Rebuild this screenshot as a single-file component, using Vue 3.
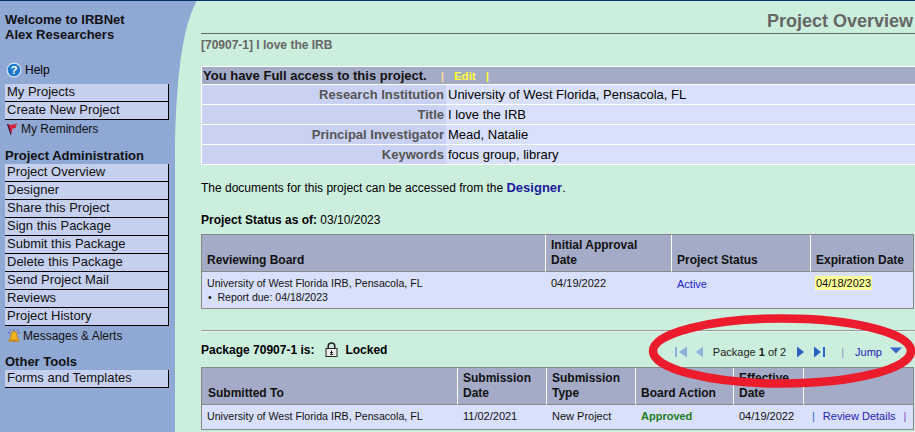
<script setup>
const adminLinks = ['Project Overview','Designer','Share this Project','Sign this Package','Submit this Package','Delete this Package','Send Project Mail','Reviews','Project History']
const details = [
  ['Research Institution','University of West Florida, Pensacola, FL'],
  ['Title','I love the IRB'],
  ['Principal Investigator','Mead, Natalie'],
  ['Keywords','focus group, library'],
]
</script>

<template>
  <div class="page">
    <aside class="side">
      <div class="welcome">Welcome to IRBNet<br>Alex Researchers</div>
      <div class="help">
        <svg width="16" height="16" viewBox="0 0 16 16"><circle cx="8" cy="8" r="7.5" fill="#d8e8f8"/><circle cx="8" cy="8" r="6.3" fill="#1c78cc"/><text x="8" y="12.2" text-anchor="middle" font-size="11.5" font-weight="700" font-family="Liberation Sans" fill="#fff">?</text></svg>
        <span>Help</span>
      </div>
      <a class="nav">My Projects</a>
      <a class="nav">Create New Project</a>
      <div class="rem">
        <svg width="11" height="12" viewBox="0 0 11 12"><path d="M0.5 1 L4 2 L10.5 0.5 L8.5 3 L9 5 L5.5 5.5 L4 11.5 Z" fill="#d8203a"/><path d="M0.5 1 L4 11.5" stroke="#3a1040" stroke-width="1.1" fill="none"/></svg>
        <span>My Reminders</span>
      </div>
      <div class="head">Project Administration</div>
      <a v-for="l in adminLinks" :key="l" class="nav">{{ l }}</a>
      <div class="rem msg">
        <svg width="14" height="14" viewBox="0 0 14 14"><path d="M7 2.5 C5 2.5 4 4 4 6.5 C4 9 3.2 10 2.2 11 L11.8 11 C10.8 10 10 9 10 6.5 C10 4 9 2.5 7 2.5 Z" fill="#f2b422" stroke="#b87808" stroke-width=".8"/><rect x="1.5" y="11" width="11" height="1.6" fill="#c98a10"/><path d="M1 3 L3 4.5 M13 3 L11 4.5 M7 0 V1.8 M3 .5 L4 2 M11 .5 L10 2" stroke="#5a3a90" stroke-width=".8" fill="none"/></svg>
        <span>Messages &amp; Alerts</span>
      </div>
      <div class="head other">Other Tools</div>
      <a class="nav">Forms and Templates</a>
    </aside>

    <main class="main">
      <svg class="curve" width="24" height="150" viewBox="0 0 24 150"><path d="M0 0 H22 C12 20 2 50 0 150 Z" fill="#90a8d4"/></svg>
      <h1 class="title">Project Overview</h1>
      <div class="crumb">[70907-1] I love the IRB</div>

      <table class="info">
        <colgroup><col class="lab"><col></colgroup>
        <tbody>
          <tr><td colspan="2" class="access">You have Full access to this project.<span class="edit"><i>|</i>Edit<i>|</i></span></td></tr>
          <tr v-for="d in details" :key="d[0]">
            <th>{{ d[0] }}</th><td>{{ d[1] }}</td>
          </tr>
        </tbody>
      </table>

      <p class="docs">The documents for this project can be accessed from the <a>Designer</a>.</p>
      <p class="status"><b>Project Status as of:</b> 03/10/2023</p>

      <table class="grid g1">
        <thead>
          <tr><th class="c1">Reviewing Board</th><th class="c2">Initial Approval<br>Date</th><th class="c3">Project Status</th><th>Expiration Date</th></tr>
        </thead>
        <tbody>
          <tr>
            <td class="board">University of West Florida IRB, Pensacola, FL<div class="due">•&nbsp; Report due: 04/18/2023</div></td>
            <td>04/19/2022</td>
            <td class="active">Active</td>
            <td><mark>04/18/2023</mark></td>
          </tr>
        </tbody>
      </table>

      <div class="rule"></div>

      <div class="pkg">
        <div class="pkg-l">
          <b>Package 70907-1 is:</b>
          <svg class="lock" width="13" height="15" viewBox="0 0 13 15"><path d="M3.2 7 V4.2 a3.3 3.3 0 0 1 6.6 0 V7" fill="none" stroke="#222" stroke-width="1.5"/><rect x="1" y="6.5" width="11" height="8" fill="#eee" stroke="#222"/><path d="M6.5 8.5 V12.5 M5 10.5 H8 M5 12.5 H8" stroke="#222"/></svg>
          <b>Locked</b>
        </div>
        <div class="pager">
          <svg width="12" height="12" viewBox="0 0 12 12"><rect x="0" y="1" width="2" height="10" fill="#8fb0dc"/><path d="M12 0.5 V11.5 L4 6 Z" fill="#8fb0dc"/></svg>
          <svg class="gap1" width="7" height="12" viewBox="0 0 7 12"><path d="M7 .5 V11.5 L0 6 Z" fill="#8fb0dc"/></svg>
          <span class="pno">Package <b>1</b> of 2</span>
          <svg width="7" height="12" viewBox="0 0 7 12"><path d="M0 .5 V11.5 L7 6 Z" fill="#2a62c8"/></svg>
          <svg class="gap2" width="11" height="12" viewBox="0 0 11 12"><path d="M0 .5 V11.5 L7 6 Z" fill="#2a62c8"/><rect x="9" y="1" width="2" height="10" fill="#2a62c8"/></svg>
          <i class="bar">|</i>
          <a class="jump">Jump</a>
          <svg class="tri" width="12" height="7" viewBox="0 0 12 7"><path d="M0 .5 H12 L6 6.5 Z" fill="#3a66cc"/></svg>
        </div>
      </div>

      <table class="grid g2">
        <thead>
          <tr><th class="d1">Submitted To</th><th class="d2">Submission Date</th><th class="d3">Submission Type</th><th class="d4">Board Action</th><th class="d5">Effective Date</th><th></th></tr>
        </thead>
        <tbody>
          <tr>
            <td class="board">University of West Florida IRB, Pensacola, FL</td><td>11/02/2021</td><td>New Project</td>
            <td class="appr">Approved</td><td>04/19/2022</td>
            <td class="rev"><i>|</i><a>Review Details</a><i class="last">|</i></td>
          </tr>
        </tbody>
      </table>

      <svg class="oval" width="270" height="78" viewBox="0 0 270 78"><ellipse cx="134" cy="39" rx="129" ry="32.5" fill="none" stroke="#ec1c2c" stroke-width="8.5"/></svg>
    </main>
  </div>
</template>

<style>
html, body { margin: 0; overflow: hidden; }
</style>

<style scoped>
.page { width: 915px; height: 432px; overflow: hidden; display: flex; font-family: "Liberation Sans", Arial, sans-serif; font-size: 12px; color: #000; border-top: 1px solid #003366; box-sizing: border-box; }
.side { width: 175px; flex: none; background: #90a8d4; padding: 11px 6px 0 5px; box-sizing: border-box; }
.welcome { font-weight: 700; font-size: 13px; line-height: 15px; color: #111; margin-bottom: 19px; }
.help { display: flex; align-items: center; gap: 3px; height: 18px; margin: 0 0 5px 1px; }
.nav { display: block; height: 18px; line-height: 16px; font-size: 13px; padding-left: 2px; background: #c5cfee; border-right: 1px solid #000; border-bottom: 1px solid #000; box-sizing: border-box; color: #111; }
.rem { display: flex; align-items: center; gap: 3px; height: 18px; margin-left: 2px; color: #111; }
.msg { height: 19px; gap: 2px; }
.head { font-weight: 700; font-size: 13px; line-height: 16px; margin-top: 10px; color: #111; }
.other { margin-top: 9px; }
.main { flex: 1; min-width: 0; position: relative; background: #cbeedd; padding-left: 26px; }
.curve { position: absolute; left: 0; top: -1px; }
.title { margin: 0; height: 32px; line-height: 41px; font-size: 18px; text-align: right; color: #666; padding-right: 2px; border-bottom: 1px solid #666; }
.crumb { margin-top: 3px; font-weight: 700; color: #666; line-height: 16px; }
.info { border-collapse: separate; border-spacing: 0; width: 714px; table-layout: fixed; margin-top: 13px; background: #fff; border: solid #fff; border-width: 1px 0 0 1px; }
.lab { width: 244px; }
.info td, .info th { padding: 0 0 0 2px; border-bottom: 1px solid #fff; height: 20px; line-height: 16px; font-size: 13px; box-sizing: border-box; }
.info th { text-align: right; background: #c9d2f2; color: #555; font-weight: 700; padding: 0 2px 0 0; }
.info td { background: #d9e0fb; }
.info .access { height: 18px; background: #a3abc6; font-weight: 700; padding: 0 1px; color: #111; }
.edit { font-size: 11.5px; color: #ffff33; margin-left: 14px; }
.edit i { font-style: normal; color: #ffd890; margin-right: 10px; }
.edit i:last-child { margin: 0 0 0 10px; color: #ffff33; }
.docs { margin: 15px 0 0; line-height: 16px; }
.docs a { font-weight: 700; font-size: 13px; color: #1a1a9c; }
.status { margin: 16px 0 0; line-height: 16px; }
.grid { border-collapse: separate; border-spacing: 0; table-layout: fixed; width: 713px; margin-top: 6px; border: 1px solid #888; background: #d9e0fb; }
.grid th { height: 37px; box-sizing: border-box; background: #a3abc6; text-align: left; vertical-align: bottom; padding: 0 2px 3px 5px; line-height: 15px; color: #111; border-left: 1px solid #fff; border-bottom: 1px solid #888; }
.grid th:first-child { border-left: none; }
.grid td { height: 36px; box-sizing: border-box; vertical-align: top; font-size: 11px; padding: 4px 6px; line-height: 14px; color: #111; }
.g1 td:first-child, .g2 td:first-child { padding-left: 5px; }
.board { font-size: 10.65px !important; }
.c1 { width: 343px; } .c2 { width: 126px; } .c3 { width: 139px; }
.active { color: #2222cc !important; padding-top: 5px !important; }
.due { margin-top: 0; font-size: 10.5px; padding-left: 1px; }
mark { background: #ffff99; color: #111; padding: 1px 1px; margin-left: -1px; }
.rule { border-top: 1px solid #999; border-bottom: 1px solid #e8f4ee; margin-top: 21px; }
.pkg { display: flex; justify-content: space-between; align-items: center; height: 35px; }
.pkg-l { display: flex; align-items: center; }
.lock { margin: 0 7px 0 11px; }
.pager { display: flex; align-items: center; font-size: 11px; padding: 4px 13px 0 0; }
.gap1 { margin-left: 9px; }
.pno { margin: 0 11px 0 10px; color: #222; }
.gap2 { margin-left: 10px; }
.bar { font-style: normal; color: #8a90c0; margin: 0 11px 0 16px; }
.jump { color: #2222bb; margin-right: 8px; }
.tri { margin-top: -2px; }
.g2 { margin-top: 0; }
.g2 td { height: 24px; padding-top: 4px; padding-bottom: 0; }
.g2 th { height: 37px; padding-left: 5px; }
.d1 { width: 255px; padding-left: 6px !important; } .d2 { width: 89px; } .d3 { width: 89px; } .d4 { width: 98px; } .d5 { width: 70px; }
.appr { color: #1d7a1d !important; font-weight: 700; }
.rev { white-space: nowrap; padding-left: 9px !important; padding-right: 0 !important; }
.rev i { font-style: normal; color: #2a62c8; }
.rev i.last { color: #8a50c0; }
.rev a { color: #2222bb; margin: 0 8px; }
.oval { position: absolute; left: 473px; top: 311px; pointer-events: none; }
</style>
